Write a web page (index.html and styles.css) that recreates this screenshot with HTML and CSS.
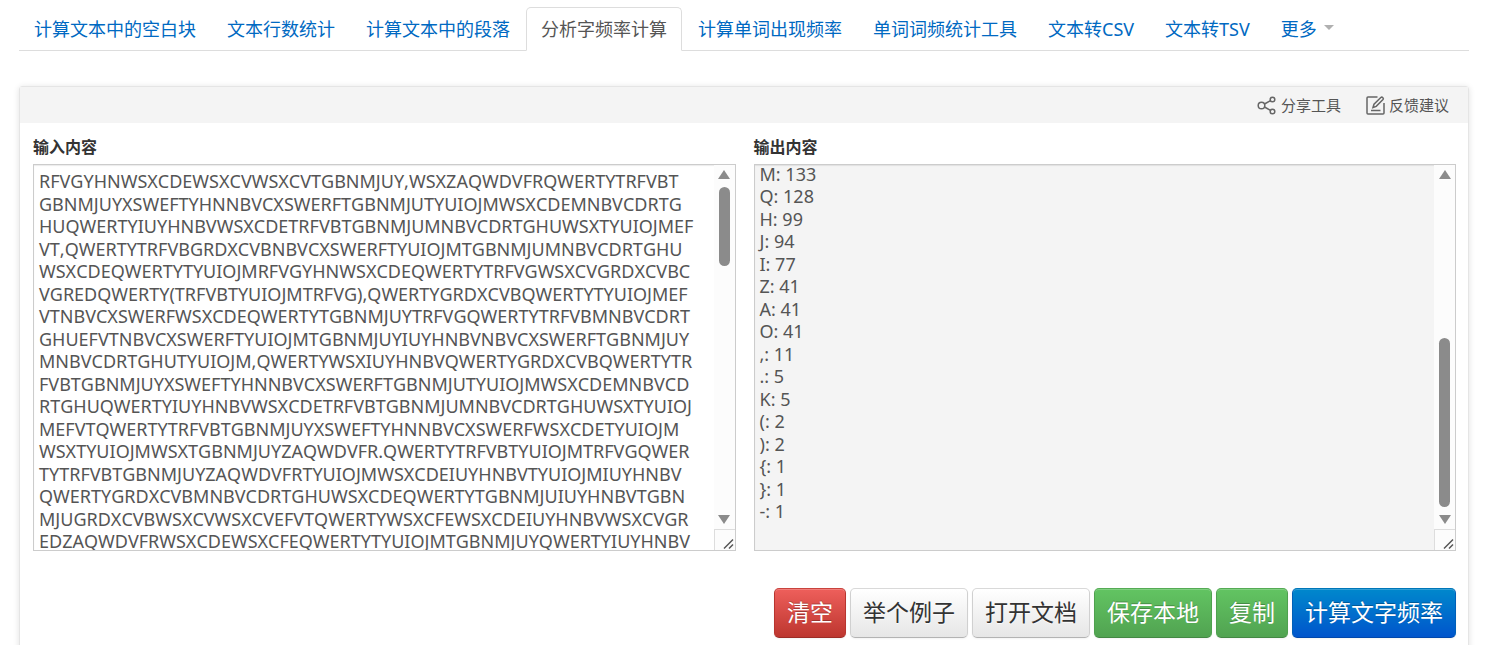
FILE: index.html
```html
<!DOCTYPE html>
<html lang="zh-CN">
  <head>
    <meta charset="UTF-8" />
    <meta name="viewport" content="width=device-width, initial-scale=1.0" />
    <title>分析字频率计算</title>
    <link rel="stylesheet" href="styles.css">
  </head>
  <body>
    <nav class="tabs">
      <a href="#">计算文本中的空白块</a>
      <a href="#">文本行数统计</a>
      <a href="#">计算文本中的段落</a>
      <a href="#" class="active">分析字频率计算</a>
      <a href="#">计算单词出现频率</a>
      <a href="#">单词词频统计工具</a>
      <a href="#">文本转CSV</a>
      <a href="#">文本转TSV</a>
      <a href="#">更多<span class="caret"></span></a>
    </nav>

    <main class="panel">
      <div class="toolbar">
        <a href="#">
          <svg width="20" height="20" viewBox="0 0 20 20" fill="none" stroke="#666" stroke-width="1.5">
            <circle cx="4.500" cy="10.500" r="3.300" />
            <circle cx="15.500" cy="4.500" r="2.300" />
            <circle cx="15.500" cy="16.500" r="2.300" />
            <path d="M7.500 9l6-3.400M7.500 12l6 3.400" />
          </svg>
          <span>分享工具</span>
        </a>
        <a href="#">
          <svg width="20" height="20" viewBox="0 0 20 20" fill="none" stroke="#666" stroke-width="1.5">
            <path d="M12.500 2H3Q2 2 2 3V18Q2 19 3 19H18Q19 19 19 18V8" />
            <path d="M8 12.500L9 9.200L15.800 2.500Q16.800 1.700 17.900 2.700Q18.800 3.700 18 4.600L11.200 11.400Z" />
            <path d="M6 15.500H15.500" />
          </svg>
          <span>反馈建议</span>
        </a>
      </div>

      <div class="columns">
        <div class="field">
          <label for="inputText">输入内容</label>
          <div class="text-box">
            <textarea id="inputText" spellcheck="false">RFVGYHNWSXCDEWSXCVWSXCVTGBNMJUY,WSXZAQWDVFRQWERTYTRFVBT
GBNMJUYXSWEFTYHNNBVCXSWERFTGBNMJUTYUIOJMWSXCDEMNBVCDRTG
HUQWERTYIUYHNBVWSXCDETRFVBTGBNMJUMNBVCDRTGHUWSXTYUIOJMEF
VT,QWERTYTRFVBGRDXCVBNBVCXSWERFTYUIOJMTGBNMJUMNBVCDRTGHU
WSXCDEQWERTYTYUIOJMRFVGYHNWSXCDEQWERTYTRFVGWSXCVGRDXCVBC
VGREDQWERTY(TRFVBTYUIOJMTRFVG),QWERTYGRDXCVBQWERTYTYUIOJMEF
VTNBVCXSWERFWSXCDEQWERTYTGBNMJUYTRFVGQWERTYTRFVBMNBVCDRT
GHUEFVTNBVCXSWERFTYUIOJMTGBNMJUYIUYHNBVNBVCXSWERFTGBNMJUY
MNBVCDRTGHUTYUIOJM,QWERTYWSXIUYHNBVQWERTYGRDXCVBQWERTYTR
FVBTGBNMJUYXSWEFTYHNNBVCXSWERFTGBNMJUTYUIOJMWSXCDEMNBVCD
RTGHUQWERTYIUYHNBVWSXCDETRFVBTGBNMJUMNBVCDRTGHUWSXTYUIOJ
MEFVTQWERTYTRFVBTGBNMJUYXSWEFTYHNNBVCXSWERFWSXCDETYUIOJM
WSXTYUIOJMWSXTGBNMJUYZAQWDVFR.QWERTYTRFVBTYUIOJMTRFVGQWER
TYTRFVBTGBNMJUYZAQWDVFRTYUIOJMWSXCDEIUYHNBVTYUIOJMIUYHNBV
QWERTYGRDXCVBMNBVCDRTGHUWSXCDEQWERTYTGBNMJUIUYHNBVTGBN
MJUGRDXCVBWSXCVWSXCVEFVTQWERTYWSXCFEWSXCDEIUYHNBVWSXCVGR
EDZAQWDVFRWSXCDEWSXCFEQWERTYTYUIOJMTGBNMJUYQWERTYIUYHNBV
</textarea>
            <div class="scrollbar">
              <span class="arrow arrow-up"></span>
              <div class="track"><div class="thumb"></div></div>
              <span class="arrow arrow-down"></span>
              <svg class="grip" viewBox="0 0 20 20" stroke="#555" stroke-width="1.5">
                <path d="M9 18.500L18 9.500M14 18.500L18 14.500" />
              </svg>
            </div>
          </div>
        </div>
        <div class="field">
          <label for="outputText">输出内容</label>
          <div class="text-box">
            <textarea id="outputText" class="output" readonly>
T: 312
V: 287
R: 271
Y: 263
W: 249
E: 241
B: 236
N: 229
C: 214
S: 198
X: 196
D: 187
F: 181
G: 174
U: 168
M: 133
Q: 128
H: 99
J: 94
I: 77
Z: 41
A: 41
O: 41
,: 11
.: 5
K: 5
(: 2
): 2
{: 1
}: 1
-: 1
</textarea>
            <div class="scrollbar">
              <span class="arrow arrow-up"></span>
              <div class="track"><div class="thumb"></div></div>
              <span class="arrow arrow-down"></span>
              <svg class="grip" viewBox="0 0 20 20" stroke="#555" stroke-width="1.5">
                <path d="M9 18.500L18 9.500M14 18.500L18 14.500" />
              </svg>
            </div>
          </div>
        </div>
      </div>

      <div class="actions">
        <button type="button" class="btn btn-danger">清空</button>
        <button type="button" class="btn">举个例子</button>
        <button type="button" class="btn">打开文档</button>
        <button type="button" class="btn btn-success">保存本地</button>
        <button type="button" class="btn btn-success">复制</button>
        <button type="button" class="btn btn-primary">计算文字频率</button>
      </div>
    </main>

    <script>
      const inputText = document.getElementById("inputText");
      const outputText = document.getElementById("outputText");

      // Size and place the thumb for the current scroll position
      function updateThumb(box) {
        const area = box.querySelector("textarea");
        const thumb = box.querySelector(".thumb");
        const track = box.querySelector(".track").clientHeight;
        thumb.style.height = Math.round(track * area.clientHeight / area.scrollHeight) + "px";
        thumb.style.top = Math.round(track * area.scrollTop / area.scrollHeight) + "px";
      }

      // Sample text, long enough to scroll
      inputText.value = inputText.value.repeat(4);
      inputText.scrollTop = 0;

      // Show the end of the result list
      outputText.scrollTop = outputText.scrollHeight;

      document.querySelectorAll(".text-box").forEach((box) => {
        const area = box.querySelector("textarea");
        area.addEventListener("scroll", () => updateThumb(box));
        area.addEventListener("input", () => updateThumb(box));
        updateThumb(box);
      });
    </script>
  </body>
</html>
```
FILE: styles.css
```css
* {
  box-sizing: border-box;
}

body {
  margin: 0;
  padding: 7px 22px 0 19px;
  font-family: "Noto Sans", "Noto Sans CJK SC", sans-serif;
  font-size: 18px;
  color: #333;
  background-color: #fff;
}

a {
  color: #0069c2;
  text-decoration: none;
}

.tabs {
  display: flex;
  border-bottom: 1px solid #ddd;
}

.tabs a {
  margin: 0 1px -1px 0;
  padding: 0 14px;
  line-height: 42px;
  border: 1px solid transparent;
  border-radius: 5px 5px 0 0;
  white-space: nowrap;
}

.tabs .active {
  color: #555;
  background-color: #fff;
  border-color: #ddd;
  border-bottom-color: #fff;
}

.caret {
  display: inline-block;
  margin-left: 7px;
  vertical-align: 6px;
  border: 5px solid transparent;
  border-top-color: #b0b0b0;
  border-bottom: 0;
}

.panel {
  margin-top: 35px;
  padding-bottom: 20px;
  border: 1px solid #e5e5e5;
  border-radius: 3px;
  box-shadow: 0 1px 6px rgba(0, 0, 0, 0.12);
}

.toolbar {
  display: flex;
  justify-content: flex-end;
  gap: 24px;
  height: 36px;
  padding-right: 19px;
  background-color: #f4f4f4;
}

.toolbar a {
  display: flex;
  align-items: center;
  gap: 4px;
  font-size: 15px;
  color: #555;
}

.toolbar span {
  padding-bottom: 2px;
}

.columns {
  display: grid;
  grid-template-columns: 1fr 1fr;
  gap: 18px;
  padding: 12px 12px 0 13px;
}

.field {
  display: flex;
  flex-direction: column;
  gap: 5px;
}

.field label {
  font-size: 16px;
  font-weight: bold;
  line-height: 24px;
}

.text-box {
  position: relative;
}

textarea {
  display: block;
  width: 100%;
  height: 387px;
  padding: 5px 26px 5px 5px;
  font-family: "Noto Sans", "Noto Sans CJK SC", sans-serif;
  font-size: 18px;
  font-kerning: none;
  line-height: 1.25;
  color: #555;
  white-space: pre;
  overflow-x: hidden;
  overflow-y: scroll;
  scrollbar-width: none;
  background-color: #fff;
  border: 1px solid #ccc;
  border-radius: 0;
  box-shadow: inset 0 1px 1px rgba(0, 0, 0, 0.08);
  resize: none;
}

.output {
  background-color: #f4f4f4;
}

/* Scrollbar drawn over the right edge of the text box */
.scrollbar {
  position: absolute;
  top: 1px;
  right: 1px;
  bottom: 1px;
  display: flex;
  flex-direction: column;
  align-items: center;
  width: 21px;
  background-color: #fcfcfc;
}

.arrow {
  height: 22px;
  padding: 5px 0;
}

.arrow::before {
  content: "";
  display: block;
  border: 6px solid transparent;
}

.arrow-up::before {
  border-top: 0;
  border-bottom: 9px solid #8b8b8b;
}

.arrow-down {
  padding-top: 8px;
}

.arrow-down::before {
  border-top: 9px solid #8b8b8b;
  border-bottom: 0;
}

.track {
  position: relative;
  flex: 1;
  width: 11px;
}

.thumb {
  position: absolute;
  width: 100%;
  background-color: #8b8b8b;
  border-radius: 6px;
}

.grip {
  width: 21px;
  height: 21px;
  border: 1px solid #ddd;
  border-width: 1px 0 0 1px;
}

.actions {
  display: flex;
  justify-content: flex-end;
  gap: 4px;
  padding: 37px 12px 0 0;
}

.btn {
  height: 50px;
  padding: 0 12px 4px;
  font-family: inherit;
  font-size: 23px;
  color: #333;
  text-shadow: 0 1px 1px rgba(255, 255, 255, 0.75);
  background: linear-gradient(#fff, #e6e6e6);
  border: 1px solid #ccc;
  border-color: #d9d9d9 #d0d0d0 #b3b3b3;
  border-radius: 5px;
  box-shadow: inset 0 1px 0 rgba(255, 255, 255, 0.2), 0 1px 2px rgba(0, 0, 0, 0.05);
  cursor: pointer;
}

.btn-danger,
.btn-success,
.btn-primary {
  color: #fff;
  text-shadow: 0 -1px 0 rgba(0, 0, 0, 0.25);
}

.btn-danger {
  background: linear-gradient(#ee5f5b, #bd362f);
  border-color: #c9433d #b8352f #9c2b25;
}

.btn-success {
  background: linear-gradient(#62c462, #51a351);
  border-color: #55ab55 #4fa14f #438743;
}

.btn-primary {
  background: linear-gradient(#0088cc, #0055cc);
  border-color: #0077b8 #0060b8 #0047ab;
}
```
